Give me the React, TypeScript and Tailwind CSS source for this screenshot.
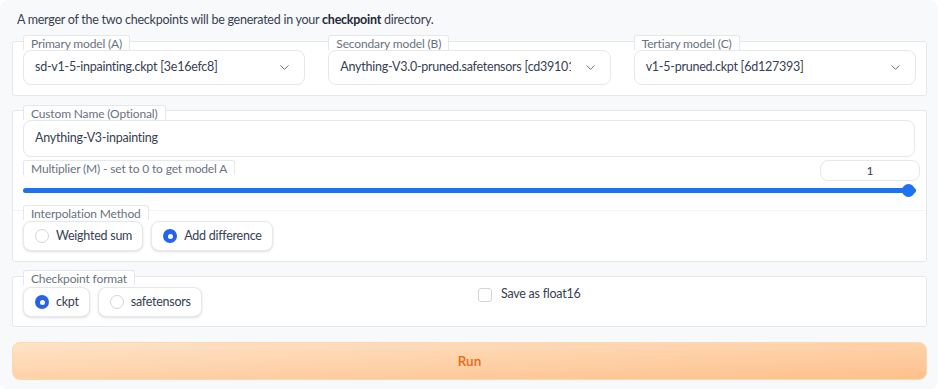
import { ChevronDown } from "lucide-react";

const font = { fontFamily: "Lato, 'Noto Sans', sans-serif" };

function BoxLabel({ text }: { text: string }) {
  return (
    <span className="inline-block self-start bg-white border border-b-0 border-gray-200 rounded-t-[3px] px-[7px] h-[15px] leading-[15px] text-[12px] tracking-[-0.15px] text-gray-500">
      {text}
    </span>
  );
}

function Dropdown({ label, value }: { label: string; value: string }) {
  return (
    <div className="flex flex-col flex-1 min-w-0">
      <BoxLabel text={label} />
      <div className="flex items-center justify-between h-[35px] bg-white border border-gray-200 rounded-lg pl-[11px] pr-[12px]">
        <span className="overflow-hidden whitespace-nowrap text-[12.5px] tracking-[-0.25px] text-gray-700">{value}</span>
        <ChevronDown className="shrink-0 ml-3 text-gray-500" size={15} strokeWidth={1.6} />
      </div>
    </div>
  );
}

function Radio({ label, checked }: { label: string; checked?: boolean }) {
  return (
    <div className="flex items-center gap-[7px] h-[30px] bg-white border border-gray-200 rounded-lg shadow-sm pl-[11px] pr-[10px]">
      {checked ? (
        <span className="w-[14px] h-[14px] rounded-full bg-[#2563eb] flex items-center justify-center">
          <span className="w-[5px] h-[5px] rounded-full bg-white" />
        </span>
      ) : (
        <span className="w-[14px] h-[14px] rounded-full border border-gray-300 bg-white" />
      )}
      <span className="text-[12.5px] tracking-[-0.25px] text-gray-700">{label}</span>
    </div>
  );
}

export default function App() {
  return (
    <div className="min-h-screen bg-white" style={font}>
      <div className="w-full h-[389px] bg-[#f8f9fb] rounded-lg pl-[12px] pr-[11px] pt-[9px]">
        <p className="pl-[5px] text-[12.5px] tracking-[-0.25px] leading-[18px] pt-[2px] text-gray-700 h-[26px]">
          A merger of the two checkpoints will be generated in your <b className="font-bold text-gray-800">checkpoint</b> directory.
        </p>

        {/* models */}
        <div className="mt-[6px] bg-white border border-gray-200 rounded-[3px] h-[55px] px-[10px]">
          <div className="flex gap-[23px] -mt-[7px]">
            <Dropdown label="Primary model (A)" value="sd-v1-5-inpainting.ckpt [3e16efc8]" />
            <Dropdown label="Secondary model (B)" value="Anything-V3.0-pruned.safetensors [cd391015" />
            <Dropdown label="Tertiary model (C)" value="v1-5-pruned.ckpt [6d127393]" />
          </div>
        </div>

        {/* name, multiplier, interpolation */}
        <div className="mt-[14px] bg-white border border-gray-200 rounded-[3px] h-[152px] px-[10px]">
          <div className="flex flex-col -mt-[6px]">
            <BoxLabel text="Custom Name (Optional)" />
            <div className="flex items-center h-[37px] bg-white border border-gray-200 rounded-lg pl-[11px] mr-[1px] text-[12.5px] tracking-[-0.25px] text-gray-700">
              Anything-V3-inpainting
            </div>
            <div className="flex items-start justify-between mt-[3px]">
              <BoxLabel text="Multiplier (M) - set to 0 to get model A" />
              <div className="w-[100px] h-[21px] -mr-[4px] border border-gray-200 rounded-lg flex items-center justify-center text-[12px] text-gray-700">
                1
              </div>
            </div>
            <div className="relative h-[16px] mt-[1px] flex items-center">
              <div className="w-full h-[5px] rounded-full bg-[#1d72f2]" />
              <div className="absolute right-[1px] w-[13px] h-[13px] rounded-full bg-[#1d72f2]" />
            </div>
            <div className="border-t border-gray-100 -mx-[10px] px-[10px] mt-[12px]">
              <div className="-mt-[6px] flex flex-col">
                <BoxLabel text="Interpolation Method" />
                <div className="flex gap-[8px] mt-[1px]">
                  <Radio label="Weighted sum" />
                  <Radio label="Add difference" checked />
                </div>
              </div>
            </div>
          </div>
        </div>

        {/* format */}
        <div className="mt-[14px] bg-white border border-gray-200 rounded-[3px] h-[51px] px-[10px]">
          <div className="flex gap-[13px] -mt-[7px]">
            <div className="flex-1 flex flex-col">
              <BoxLabel text="Checkpoint format" />
              <div className="flex gap-[8px] mt-[2px]">
                <Radio label="ckpt" checked />
                <Radio label="safetensors" />
              </div>
            </div>
            <div className="flex-1 flex items-center gap-[9px] pt-[11px] pl-[4px] h-[38px]">
              <span className="w-[14px] h-[14px] rounded-[3px] border border-gray-300 bg-white" />
              <span className="text-[12.5px] tracking-[-0.25px] text-gray-700">Save as float16</span>
            </div>
          </div>
        </div>

        <button className="mt-[15px] w-full h-[38px] rounded-lg border border-[#fed7aa] bg-gradient-to-br from-[#fee3c8] to-[#fdc08a] text-[#ea6a10] font-semibold text-[13.5px]">
          Run
        </button>
      </div>
    </div>
  );
}
